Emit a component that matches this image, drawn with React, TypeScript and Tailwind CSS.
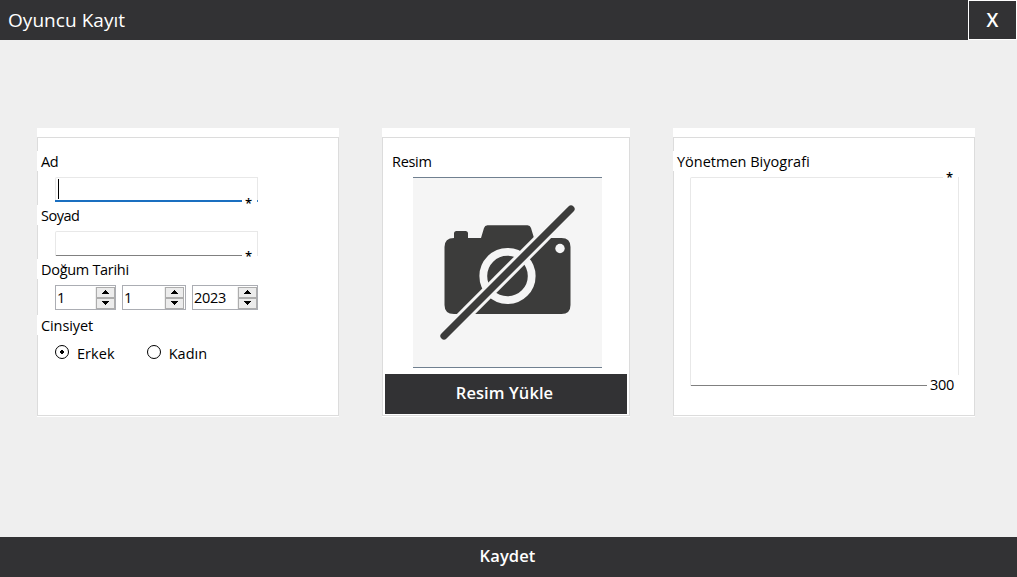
import { useState } from 'react';
import type { ReactNode } from 'react';

function Card({ width, children }: { width: string; children: ReactNode }) {
  return (
    <section className={`${width} h-[289px] shrink-0 bg-white pt-[9px]`}>
      <div className="flex h-[279px] flex-col border border-[#dcdcdc] pt-[13px]">{children}</div>
    </section>
  );
}

function Label({ children, className = '' }: { children: ReactNode; className?: string }) {
  return (
    <div className={`-ml-px h-5 w-fit shrink-0 whitespace-nowrap bg-white pl-1 leading-[22px] ${className}`}>
      {children}
    </div>
  );
}

function TextField({ active = false }: { active?: boolean }) {
  return (
    <div className="relative ml-[17px] mt-1.5 mb-[3px] flex h-[25px] w-[203px] shrink-0 rounded-tl-[2px] border border-b-0 border-[#e8e8e8]">
      <div
        className={
          active
            ? '-ml-px w-[187px] border-b-2 border-[#1a6fc0] pl-[3px] pt-px'
            : 'w-[186px] border-b border-[#808080]'
        }
      >
        {active && <div className="h-5 w-px bg-black" />}
      </div>
      <span className={`ml-[3px] text-[13px] font-semibold leading-[14px] ${active ? 'mt-[18px]' : 'mt-[17px]'}`}>*</span>
      {active && <i className="absolute -right-px bottom-0 h-0.5 w-px bg-[#3c83c4]" />}
    </div>
  );
}

function Arrow({ down = false }: { down?: boolean }) {
  return (
    <button className="flex h-[11px] w-[19px] items-center justify-center border border-[#adadad] bg-[#ececec]">
      <svg width="7" height="4" viewBox="0 0 7 4" shapeRendering="crispEdges">
        <path d={down ? 'M0 0h7v1H6v1H5v1H4v1H3V3H2V2H1V1H0z' : 'M3 0h1v1h1v1h1v1h1v1H0V3h1V2h1V1h1z'} />
      </svg>
    </button>
  );
}

function Spinner({ value, width, inset = 'pr-px' }: { value: string; width: string; inset?: string }) {
  return (
    <div className={`${width} ${inset} flex h-[25px] items-center justify-between border border-[#abadb3] pl-px`}>
      <span className="pt-px tracking-[-0.3px]">{value}</span>
      <span className="flex flex-col border-l border-[#f0f0f0]">
        <Arrow />
        <Arrow down />
      </span>
    </div>
  );
}

function Radio({ checked, onClick, children }: { checked: boolean; onClick: () => void; children: ReactNode }) {
  return (
    <button className="flex items-center" onClick={onClick}>
      <svg width="14" height="14" viewBox="0 0 14 14" className="-mt-[3px] mr-2">
        <circle cx="7" cy="7" r="6.5" fill="white" stroke="black" />
        {checked && <path d="M6 5h2v1h1v2H8v1H6V8H5V6h1z" />}
      </svg>
      <span className="pt-0.5">{children}</span>
    </button>
  );
}

function NoPhoto() {
  return (
    <svg width="189" height="189" viewBox="0 0 189 189" fill="#3c3c3b">
      <path d="M41 60V55.500q0-2.500 2.500-2.500h9q2.500 0 2.500 2.500V60h13l3-10q.8-2.700 3.500-2.700h40q2.700 0 3.500 2.700l3 10H148.500q9 0 9 9V127q0 9-9 9H41q-9.500 0-9.500-9V69q0-9 9.500-9z" />
      <circle cx="94.500" cy="98" r="24.200" fill="none" stroke="#f5f5f5" strokeWidth="7.800" />
      <circle cx="147" cy="70.500" r="4.700" fill="#f5f5f5" />
      <path d="M31 158L158 31" stroke="#f5f5f5" strokeWidth="13" />
      <path d="M31 158L158 31" stroke="#3c3c3b" strokeWidth="7.200" strokeLinecap="round" />
    </svg>
  );
}

export default function App() {
  const [gender, setGender] = useState('Erkek');
  return (
    <div className="flex h-[577px] w-[1017px] flex-col bg-[#efefef] font-['Open_Sans',sans-serif] text-[14.500px] leading-5 text-black">
      <header className="flex h-10 shrink-0 items-start justify-between bg-[#323234] pl-2 text-white">
        <h1 className="text-[19px] font-medium leading-10 tracking-[0.05px]">Oyuncu Kayıt</h1>
        <button className="h-10 w-[49px] border border-white text-[19px] font-semibold">X</button>
      </header>

      <main className="flex flex-1 items-start gap-[43px] pl-[37px] pt-[88px]">
        <Card width="w-[302px]">
          <Label className="tracking-[-0.3px]">Ad</Label>
          <TextField active />
          <Label className="tracking-[-0.5px]">Soyad</Label>
          <TextField />
          <Label className="tracking-[-0.3px]">Doğum Tarihi</Label>
          <div className="mb-[5px] ml-[17px] mt-1.5 flex gap-1.5">
            <Spinner value="1" width="w-[61px]" inset="pr-0" />
            <Spinner value="1" width="w-[64px]" />
            <Spinner value="2023" width="w-[66px]" inset="pr-0" />
          </div>
          <Label className="tracking-[-0.1px]">Cinsiyet</Label>
          <div className="ml-[17px] mt-[7px] flex gap-8 tracking-[0.05px]">
            <Radio checked={gender === 'Erkek'} onClick={() => setGender('Erkek')}>Erkek</Radio>
            <Radio checked={gender === 'Kadın'} onClick={() => setGender('Kadın')}>Kadın</Radio>
          </div>
        </Card>

        <Card width="w-[248px]">
          <Label className="ml-[5px] tracking-[-0.3px]">Resim</Label>
          <div className="ml-[30px] mt-1.5 w-[189px] border-y border-[#708090] bg-[#f5f5f5]">
            <NoPhoto />
          </div>
          <button className="ml-0.5 mt-1.5 h-10 w-[242px] shrink-0 bg-[#323234] pb-0.5 pr-[3px] text-[16.500px] font-semibold tracking-[0.08px] text-white">
            Resim Yükle
          </button>
        </Card>

        <Card width="w-[302px]">
          <Label>Yönetmen Biyografi</Label>
          <div className="relative ml-4 mt-1.5 h-[209px] w-[269px] rounded-tl-[2px] border border-b-0 border-[#e8e8e8]">
            <span className="absolute -top-2 right-0 h-4 w-[15px] bg-white pl-[3px] text-[13px] font-semibold leading-[15px]">*</span>
            <i className="absolute bottom-0 left-0 h-px w-[236px] bg-[#808080]" />
            <span className="absolute -bottom-[9px] -right-px w-8 bg-white pl-[3px] tracking-[-0.3px]">300</span>
          </div>
        </Card>
      </main>

      <button className="h-10 shrink-0 bg-[#323234] pb-0.5 pr-0.5 text-[16.500px] font-semibold tracking-[0.1px] text-white">Kaydet</button>
    </div>
  );
}
